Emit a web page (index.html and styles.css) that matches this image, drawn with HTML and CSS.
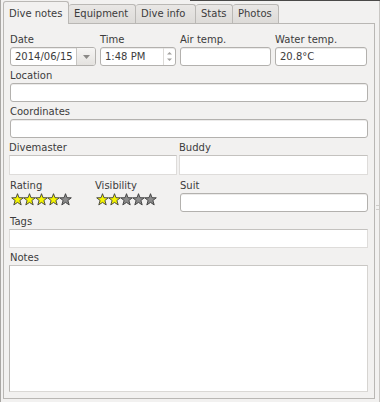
FILE: index.html
```html
<!DOCTYPE html>
<html>
<head>
<meta charset="utf-8">
<link rel="stylesheet" href="styles.css">
</head>
<body>
<div class="window">
  <div class="main">
    <div class="tabs">
      <div class="tab active">Dive notes</div>
      <div class="tab">Equipment</div>
      <div class="tab">Dive info</div>
      <div class="tab">Stats</div>
      <div class="tab">Photos</div>
    </div>
    <div class="panel">
      <div class="row4">
        <div class="field">
          <div class="label">Date</div>
          <div class="input combo"><span class="val">2014/06/15</span><span class="combo-btn"><svg width="7" height="4" viewBox="0 0 7 4"><path d="M0 0H7L3.5 4Z" fill="#8a8886"/></svg></span></div>
        </div>
        <div class="field">
          <div class="label">Time</div>
          <div class="input spin"><span class="val">1:48 PM</span><span class="spin-btn"><svg width="5" height="11" viewBox="0 0 5 11"><path d="M0 3.5L2.5 1L5 3.5Z" fill="#a3a19f"/><path d="M0 7.5H5L2.5 10Z" fill="#a3a19f"/></svg></span></div>
        </div>
        <div class="field">
          <div class="label">Air temp.</div>
          <div class="input"></div>
        </div>
        <div class="field">
          <div class="label">Water temp.</div>
          <div class="input"><span class="val">20.8°C</span></div>
        </div>
      </div>
      <div class="field">
        <div class="label">Location</div>
        <div class="input"></div>
      </div>
      <div class="field">
        <div class="label">Coordinates</div>
        <div class="input"></div>
      </div>
      <div class="row2">
        <div class="field">
          <div class="label">Divemaster</div>
          <div class="flat"></div>
        </div>
        <div class="field">
          <div class="label">Buddy</div>
          <div class="flat"></div>
        </div>
      </div>
      <div class="row3">
        <div class="field">
          <div class="label">Rating</div>
          <svg class="stars" width="62" height="13" viewBox="0 0 62 13">
            <defs><polygon id="st" points="6,0.2 7.5,4.2 11.8,4.3 8.4,7 9.7,11.4 6,8.9 2.3,11.4 3.6,7 0.2,4.3 4.5,4.2"/></defs>
            <use href="#st" x="0.5" y="0.5" fill="#f6f600" stroke="#3c3c3c" stroke-width="0.9"/>
            <use href="#st" x="12.5" y="0.5" fill="#f6f600" stroke="#3c3c3c" stroke-width="0.9"/>
            <use href="#st" x="24.5" y="0.5" fill="#f6f600" stroke="#3c3c3c" stroke-width="0.9"/>
            <use href="#st" x="36.5" y="0.5" fill="#f6f600" stroke="#3c3c3c" stroke-width="0.9"/>
            <use href="#st" x="48.5" y="0.5" fill="#8c8c8c" stroke="#3c3c3c" stroke-width="0.9"/>
          </svg>
        </div>
        <div class="field">
          <div class="label">Visibility</div>
          <svg class="stars" width="62" height="13" viewBox="0 0 62 13">
            <use href="#st" x="0.5" y="0.5" fill="#f6f600" stroke="#3c3c3c" stroke-width="0.9"/>
            <use href="#st" x="12.5" y="0.5" fill="#f6f600" stroke="#3c3c3c" stroke-width="0.9"/>
            <use href="#st" x="24.5" y="0.5" fill="#8c8c8c" stroke="#3c3c3c" stroke-width="0.9"/>
            <use href="#st" x="36.5" y="0.5" fill="#8c8c8c" stroke="#3c3c3c" stroke-width="0.9"/>
            <use href="#st" x="48.5" y="0.5" fill="#8c8c8c" stroke="#3c3c3c" stroke-width="0.9"/>
          </svg>
        </div>
        <div class="field">
          <div class="label">Suit</div>
          <div class="input"></div>
        </div>
      </div>
      <div class="field">
        <div class="label">Tags</div>
        <div class="flat"></div>
      </div>
      <div class="field notes">
        <div class="label">Notes</div>
        <div class="flat area"></div>
      </div>
    </div>
  </div>
  <div class="side"><span class="grip"></span></div>
</div>
</body>
</html>
```
FILE: styles.css
```css
html, body {
  margin: 0;
  padding: 0;
  background: #f2f1f0;
  font-family: "DejaVu Sans", sans-serif;
  font-size: 10px;
  color: #3c3c3c;
}
.window {
  display: flex;
  height: 402px;
  border-left: 1px solid #a9a7a4;
  padding-left: 2px;
  box-sizing: border-box;
  position: relative;
}
.window::before {
  content: "";
  position: absolute;
  top: 0;
  left: 189px;
  right: 0;
  height: 1px;
  background: #4a4948;
}
.main {
  width: 372px;
  display: flex;
  flex-direction: column;
  padding-bottom: 3px;
}
.tabs {
  display: flex;
  align-items: flex-end;
  height: 23px;
  flex: none;
}
.tab {
  height: 18px;
  line-height: 18px;
  padding: 0 5px;
  border: 1px solid #bab8b5;
  border-bottom: none;
  border-left: none;
  border-radius: 3px 3px 0 0;
  background: linear-gradient(#e9e7e5, #dddbd8);
  color: #3c3c3c;
  box-sizing: content-box;
}
.tab.active {
  height: 22px;
  line-height: 24px;
  padding: 0 5px 0 5px;
  border-left: 1px solid #bab8b5;
  background: #f2f1f0;
  margin-bottom: -1px;
  position: relative;
  z-index: 1;
  width: 54px;
}
.tab:nth-child(2) { width: 56px; }
.tab:nth-child(3) { width: 49px; }
.tab:nth-child(4) { width: 26px; }
.tab:nth-child(5) { width: 35px; }
.panel {
  flex: 1;
  border: 1px solid #b9b7b4;
  padding: 6px 6px 0 6px;
  display: flex;
  flex-direction: column;
  box-sizing: border-box;
}
.field {
  display: flex;
  flex-direction: column;
  min-width: 0;
}
.label {
  line-height: 13px;
  padding: 3px 0 1px 0;
  white-space: nowrap;
}
.row4 {
  display: grid;
  grid-template-columns: 86px 76px 91px 92px;
  column-gap: 4px;
}
.row2 {
  display: grid;
  grid-template-columns: 168px 1fr;
  column-gap: 2px;
  margin-left: -1px;
}
.row3 {
  display: grid;
  grid-template-columns: 85px 85px 1fr;
  margin-top: 1px;
}
.input {
  height: 19px;
  box-sizing: border-box;
  background: #fff;
  border: 1px solid #b3b1ae;
  border-radius: 3px;
  display: flex;
  align-items: center;
  padding-left: 4px;
  box-shadow: inset 0 1px 0 #ecebea;
}
.val {
  flex: 1;
  line-height: 15px;
}
.combo {
  padding-right: 0;
}
.combo-btn {
  width: 18px;
  align-self: stretch;
  border-left: 1px solid #c7c5c2;
  background: linear-gradient(#f6f5f4, #e4e2df);
  border-radius: 0 2px 2px 0;
  display: flex;
  align-items: center;
  justify-content: center;
}
.spin-btn {
  width: 11px;
  align-self: stretch;
  border-left: 1px solid #dcdad7;
  display: flex;
  align-items: center;
  justify-content: center;
}
.flat {
  height: 20px;
  box-sizing: border-box;
  background: #fff;
  border: 1px solid #dedcda;
  border-top-color: #c4c2bf;
}
.stars {
  display: block;
  margin-left: 1px;
}
.panel > .field > .flat {
  margin-left: -1px;
  height: 19px;
}
.notes {
  flex: 1;
}
.panel > .field.notes > .flat.area {
  height: 127px;
  border-left-color: #b9b7b4;
  border-top-color: #c9c7c4;
  border-right-color: #d6d4d1;
  border-bottom-color: #dad8d5;
}
.side {
  flex: 1;
  border-right: 1px solid #c9c7c4;
  position: relative;
  margin-top: 1px;
}
.grip {
  position: absolute;
  left: 1px;
  right: 0;
  top: 204px;
  height: 3px;
  border-top: 1px solid #cfcdca;
  border-bottom: 1px solid #cfcdca;
}
```
